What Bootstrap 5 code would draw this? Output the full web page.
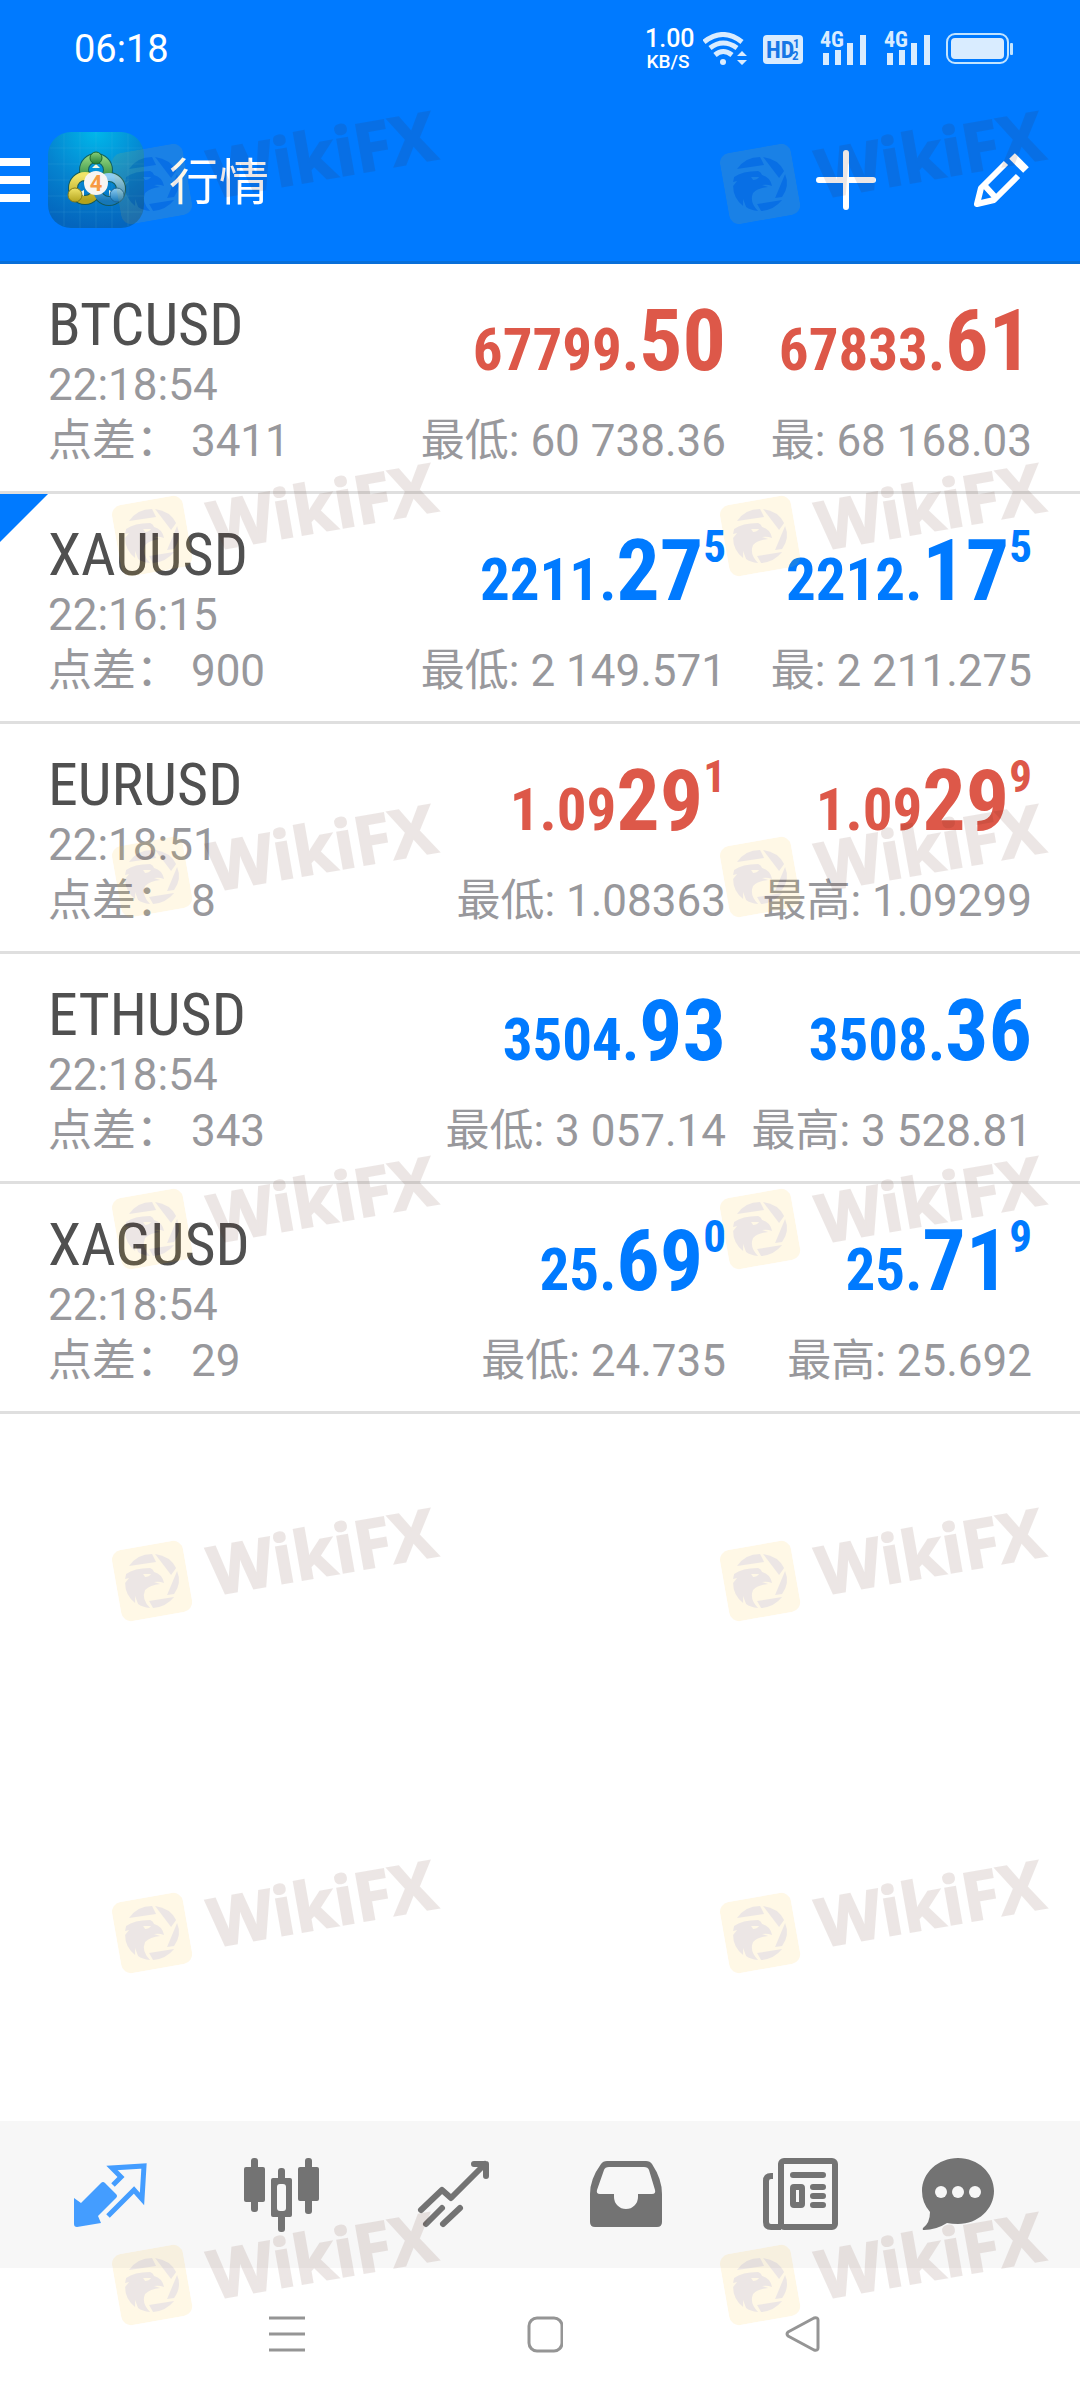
<!DOCTYPE html>
<html lang="zh-CN">
<head>
<meta charset="utf-8">
<meta name="viewport" content="width=device-width, initial-scale=1">
<title>行情</title>
<link href="https://cdn.jsdelivr.net/npm/bootstrap@5.3.0/dist/css/bootstrap.min.css" rel="stylesheet">
<style>
body{font-family:Roboto,"Noto Sans CJK SC",sans-serif;background:#fff;color:#505050}
button{background:none;border:0;padding:0}
svg{display:block;flex:none}
.top-area{background:#007aff;color:#fff;border-bottom:3px solid #086fd9}
.status-line{height:98px;padding:0 66px 0 74px;font-size:38px}
.net-speed{line-height:20px;font-size:19px;font-weight:500;margin-right:12px;width:46px}
.net-speed b{font-size:25px;line-height:26px;font-weight:500;display:block}
.signal-icon{margin-left:17px}
.battery-icon{margin-left:14px}
.title-line{height:163px;padding-right:50px}
.title-line h1{font-size:50px;line-height:60px;font-weight:400;padding-top:6px;margin-left:25px}
.app-logo{margin-left:18px}
.tools{gap:98px}
.quote{border-bottom:3px solid #dfdfdf;padding:29px 48px 22px}
.quote-high{width:306px}
.symbol-name{font:400 60px/64px "Roboto Condensed",Roboto,sans-serif}
.detail{font-size:44px;line-height:56px;color:#98989c;white-space:pre}
.price{height:120px;font:700 86px/95px "Roboto Condensed",Roboto,sans-serif;white-space:nowrap}
.price small{font-size:59px}
.price sup{font-size:45px;line-height:24px;vertical-align:38px;top:0}
.up{color:#007aff}
.down{color:#dd5849}
.corner{width:48px;height:48px;background:#007aff;clip-path:polygon(0 0,100% 0,0 100%)}
.tab-line{height:147px;background:#f7f7f7;padding:0 24px;color:#737373}
.tab-line .active{color:#449dff}
.tab-line a{color:inherit}
.key-line{height:132px;padding:0 148px 0 158px}
.watermarks{opacity:.1;color:#501909;pointer-events:none;padding:143px 0 0 116px}
.wm-line{height:352px}
.wm-short{height:341px}
.wm{width:608px;height:81px;flex:none;gap:22px;font:700 67px/81px "Open Sans",sans-serif;-webkit-text-stroke:2px #501909;stroke-linejoin:round;transform:rotate(-10deg);transform-origin:36px 50%}
</style>
<script src="https://cdn.jsdelivr.net/npm/bootstrap@5.3.0/dist/js/bootstrap.bundle.min.js"></script>
</head>
<body>
<svg width="0" height="0" class="position-absolute" aria-hidden="true">
  <symbol id="eagle" viewBox="0 0 72 72">
    <rect width="72" height="72" rx="10" fill="#ffbe18"/>
    <g transform="rotate(10 36 36)" fill="#501909">
      <path d="M13 21Q21 9 36 9L40 17Z"/>
      <path d="M39 9Q54 11 60 23L55 30Z"/>
      <path d="M61 26Q66 38 58 49L51 50Z"/>
      <path d="M33 56L58 52Q50 62 37 63Z"/>
      <path d="M10 29Q18 23 34 23Q37 24 38 27Q46 29 48 38Q43 36 38 37L44 39Q34 40 29 45Q25 54 34 63Q26 62 22 59L19 51V58Q9 50 9 38L13 33L9 34ZM27 29L29 32Q33 32 35 29Z" fill-rule="evenodd"/>
    </g>
  </symbol>
</svg>

<div class="position-relative min-vh-100 d-flex flex-column overflow-hidden">
  <header class="top-area">
    <div class="status-line d-flex align-items-center">
      <span class="me-auto">06:18</span>
      <div class="net-speed text-center"><b>1.00</b>KB/S</div>
      <svg width="44" height="34" viewBox="0 0 44 34" fill="none" stroke="#d9ecff" stroke-width="5">
        <path d="M1 10Q20-5 39 10M7 16Q20 6 34 16M12 23Q20 16 29 23"/>
        <g fill="#d9ecff" stroke="none"><circle cx="20" cy="30" r="3"/><path d="M34 24l5-5 5 5zM34 28h10l-5 5z"/></g>
      </svg>
      <svg class="ms-3" width="40" height="29" viewBox="0 0 40 29"><rect width="40" height="29" rx="4" fill="#d9ecff"/><g fill="#1677e6" font-family="Roboto Condensed" font-weight="700"><text x="3" y="23" font-size="24">HD</text><text x="30" y="13" font-size="13">1</text><text x="29" y="25" font-size="13">2</text></g></svg>
      <svg class="signal-icon" width="48" height="50" viewBox="0 -8 48 50" fill="#d9ecff"><path d="M3 21h6v12H3zM15 18h6v15h-6zM27 11h6v22h-6zM40 3h6v30h-6z"/><text x="0" y="15" font-family="Roboto Condensed" font-size="22" font-weight="700">4G</text></svg>
      <svg class="ms-3" width="48" height="50" viewBox="0 -8 48 50" fill="#d9ecff"><path d="M3 21h6v12H3zM15 18h6v15h-6zM27 11h6v22h-6zM40 3h6v30h-6z"/><text x="0" y="15" font-family="Roboto Condensed" font-size="22" font-weight="700">4G</text></svg>
      <svg class="battery-icon" width="68" height="32" viewBox="0 0 68 32"><rect x="1" y="1" width="61" height="29" rx="8" fill="none" stroke="#c2e4ff" stroke-width="2"/><rect x="5" y="5" width="53" height="21" rx="4" fill="#d9ecff"/><rect x="64" y="10" width="3" height="12" rx="1" fill="#c2e4ff"/></svg>
    </div>
    <div class="title-line d-flex align-items-center">
      <button type="button" aria-label="菜单"><svg width="30" height="44" fill="#fff"><path d="M0 0h30v8H0zM0 18h30v8H0zM0 36h30v8H0z"/></svg></button>
      <svg class="app-logo" width="96" height="96" viewBox="0 0 96 96">
        <defs>
          <radialGradient id="sky" cx=".5" cy="0" r="1"><stop offset="0" stop-color="#00b7ea"/><stop offset=".55" stop-color="#0583cf"/><stop offset="1" stop-color="#0465bd"/></radialGradient>
          <linearGradient id="gr" x2="0" y2="1"><stop stop-color="#8ad07a"/><stop offset="1" stop-color="#1f7d35"/></linearGradient>
          <linearGradient id="ye" x2="0" y2="1"><stop stop-color="#f0e468"/><stop offset="1" stop-color="#b3a31d"/></linearGradient>
          <linearGradient id="bl" x2="0" y2="1"><stop stop-color="#8ecdf2"/><stop offset="1" stop-color="#1677b8"/></linearGradient>
        </defs>
        <rect width="96" height="96" rx="23" fill="url(#sky)"/>
        <path d="M16 2v92M32 0v96M48 0v96M64 0v96M80 2v92M2 16h92M0 32h96M0 48h96M0 64h96M2 80h92" stroke="#5fc4ee" stroke-opacity=".15"/>
        <g fill="none" stroke-width="10" stroke="#174f3a" stroke-opacity=".75"><circle cx="48" cy="38" r="12"/><circle cx="37" cy="56" r="12"/><circle cx="61" cy="57" r="12"/></g>
        <g fill="none" stroke-width="8"><circle cx="48" cy="38" r="12" stroke="url(#gr)"/><circle cx="37" cy="56" r="12" stroke="url(#ye)"/><circle cx="61" cy="57" r="12" stroke="url(#bl)"/></g>
        <path d="M44 36l4-4 4 4zM30 61l6-3v6zM67 61l-6-3v6z" fill="#f4f7e0"/>
        <circle cx="48" cy="26" r="6" fill="url(#gr)" stroke="#1c6a30"/><circle cx="27" cy="63" r="7" fill="url(#ye)" stroke="#857a18"/><circle cx="69" cy="63" r="7" fill="url(#bl)" stroke="#1a659b"/>
        <circle cx="48" cy="51" r="12" fill="#f7f5f2"/>
        <text x="48" y="59" font-family="Roboto" font-size="22" font-weight="700" fill="#f79a42" text-anchor="middle">4</text>
      </svg>
      <h1 class="mb-0 me-auto">行情</h1>
      <div class="tools d-flex align-items-center">
        <button type="button" aria-label="添加"><svg width="60" height="60" stroke="#fff" stroke-width="6" stroke-linecap="round"><path d="M3 30h54M30 3v54"/></svg></button>
        <button type="button" aria-label="编辑"><svg width="56" height="56" fill="none" stroke="#fff" stroke-width="6"><path d="M32 11L7 36L3 52L20 48L44 24M11 34L22 46" stroke-linejoin="round"/><path d="M38 4L52 18" stroke-width="8"/></svg></button>
      </div>
    </div>
  </header>

  <main class="flex-grow-1">
    <ul class="list-unstyled mb-0">
      <li class="quote d-flex">
        <div class="flex-grow-1"><div class="symbol-name">BTCUSD</div><div class="detail">22:18:54</div><div class="detail">点差： 3411</div></div>
        <div class="text-end"><div class="price down"><small>67799.</small>50</div><div class="detail">最低: 60 738.36</div></div>
        <div class="quote-high text-end"><div class="price down"><small>67833.</small>61</div><div class="detail">最: 68 168.03</div></div>
      </li>
      <li class="quote d-flex position-relative">
        <span class="corner position-absolute top-0 start-0"></span>
        <div class="flex-grow-1"><div class="symbol-name">XAUUSD</div><div class="detail">22:16:15</div><div class="detail">点差： 900</div></div>
        <div class="text-end"><div class="price up"><small>2211.</small>27<sup>5</sup></div><div class="detail">最低: 2 149.571</div></div>
        <div class="quote-high text-end"><div class="price up"><small>2212.</small>17<sup>5</sup></div><div class="detail">最: 2 211.275</div></div>
      </li>
      <li class="quote d-flex">
        <div class="flex-grow-1"><div class="symbol-name">EURUSD</div><div class="detail">22:18:51</div><div class="detail">点差： 8</div></div>
        <div class="text-end"><div class="price down"><small>1.09</small>29<sup>1</sup></div><div class="detail">最低: 1.08363</div></div>
        <div class="quote-high text-end"><div class="price down"><small>1.09</small>29<sup>9</sup></div><div class="detail">最高: 1.09299</div></div>
      </li>
      <li class="quote d-flex">
        <div class="flex-grow-1"><div class="symbol-name">ETHUSD</div><div class="detail">22:18:54</div><div class="detail">点差： 343</div></div>
        <div class="text-end"><div class="price up"><small>3504.</small>93</div><div class="detail">最低: 3 057.14</div></div>
        <div class="quote-high text-end"><div class="price up"><small>3508.</small>36</div><div class="detail">最高: 3 528.81</div></div>
      </li>
      <li class="quote d-flex">
        <div class="flex-grow-1"><div class="symbol-name">XAGUSD</div><div class="detail">22:18:54</div><div class="detail">点差： 29</div></div>
        <div class="text-end"><div class="price up"><small>25.</small>69<sup>0</sup></div><div class="detail">最低: 24.735</div></div>
        <div class="quote-high text-end"><div class="price up"><small>25.</small>71<sup>9</sup></div><div class="detail">最高: 25.692</div></div>
      </li>
    </ul>
  </main>

  <nav class="tab-line nav nav-fill flex-nowrap align-items-center">
    <a class="nav-item d-flex justify-content-center active" href="#" aria-label="行情"><svg width="96" height="96"><path d="M51 38L59 30L50 21L82 19L80 52L72 43L46 69" fill="none" stroke="currentColor" stroke-width="5" stroke-linejoin="miter"/><path d="M12 51L19 56L39 36Q41 34 43 36L54 47Q56 49 54 51L36 69L39 76L15 80Q12 80 12 77Z" fill="currentColor"/></svg></a>
    <a class="nav-item d-flex justify-content-center" href="#" aria-label="图表"><svg width="96" height="96" fill="currentColor"><rect x="10" y="20" width="21" height="35" rx="2"/><rect x="17" y="11" width="7" height="54" rx="3"/><rect x="64" y="20" width="21" height="34" rx="2"/><rect x="71" y="11" width="7" height="56" rx="3"/><rect x="37" y="31" width="21" height="39" rx="2"/><rect x="44" y="21" width="7" height="64" rx="3"/><rect x="43" y="37" width="9" height="27" rx="3" fill="#f7f7f7"/></svg></a>
    <a class="nav-item d-flex justify-content-center" href="#" aria-label="交易"><svg width="96" height="96" fill="none" stroke="currentColor" stroke-width="6" stroke-linecap="round" stroke-linejoin="round"><path d="M15 63L36 43L45 51L79 17M68 17H80V29M20 77L36 61M37 77L54 61"/></svg></a>
    <a class="nav-item d-flex justify-content-center" href="#" aria-label="历史"><svg width="96" height="96" fill="currentColor"><path fill-rule="evenodd" d="M29 14H68Q72 14 74 17Q84 32 84 47V75Q84 80 79 80H17Q12 80 12 75V47Q12 32 23 17Q25 14 29 14ZM31 20Q27 20 26 23L19 43Q18 47 22 47H36V50A12 12 0 0 0 60 50V47H74Q78 47 77 43L71 23Q70 20 66 20Z"/></svg></a>
    <a class="nav-item d-flex justify-content-center" href="#" aria-label="新闻"><svg width="96" height="96" fill="none" stroke="currentColor" stroke-width="6"><rect x="31" y="14" width="54" height="66" rx="3"/><path d="M23 29H21Q16 29 16 34V75Q16 80 21 80H31"/><path d="M43 28H73M63 40H73M63 49H73M63 58H73" stroke-linecap="round"/><rect x="43" y="40" width="9" height="18" rx="1"/></svg></a>
    <a class="nav-item d-flex justify-content-center" href="#" aria-label="消息"><svg width="96" height="96" fill="currentColor"><path d="M36 11C56 11 72 26 72 44S56 77 36 77Q30 77 25 76Q14 83 2 83Q0 83 1 81Q8 76 8 65Q0 56 0 44C0 26 16 11 36 11Z"/><g fill="#f7f7f7"><circle cx="19" cy="45" r="6"/><circle cx="36" cy="45" r="6"/><circle cx="53" cy="45" r="6"/></g></svg></a>
  </nav>

  <div class="key-line d-flex align-items-center">
    <button type="button" class="col d-flex justify-content-center" aria-label="最近任务"><svg width="36" height="38" stroke="#959595" stroke-width="3"><path d="M0 3h36M0 19h36M0 35h36"/></svg></button>
    <button type="button" class="col d-flex justify-content-center" aria-label="主屏幕"><svg width="36" height="38" fill="none" stroke="#959595" stroke-width="3"><rect x="2" y="3" width="33" height="33" rx="8"/></svg></button>
    <button type="button" class="col d-flex justify-content-center" aria-label="返回"><svg width="36" height="38" fill="none" stroke="#959595" stroke-width="3" stroke-linejoin="round"><path d="M3 17Q1 19 3 21L29 35Q33 36 33 33V5Q33 2 29 3Z"/></svg></button>
  </div>

  <div class="watermarks position-absolute top-0 start-0 w-100 h-100 overflow-hidden" aria-hidden="true">
    <div class="wm-line d-flex"><div class="wm d-flex align-items-center"><svg width="72" height="72"><use href="#eagle"/></svg><span>WikiFX</span></div><div class="wm d-flex align-items-center"><svg width="72" height="72"><use href="#eagle"/></svg><span>WikiFX</span></div></div>
    <div class="wm-line wm-short d-flex"><div class="wm d-flex align-items-center"><svg width="72" height="72"><use href="#eagle"/></svg><span>WikiFX</span></div><div class="wm d-flex align-items-center"><svg width="72" height="72"><use href="#eagle"/></svg><span>WikiFX</span></div></div>
    <div class="wm-line d-flex"><div class="wm d-flex align-items-center"><svg width="72" height="72"><use href="#eagle"/></svg><span>WikiFX</span></div><div class="wm d-flex align-items-center"><svg width="72" height="72"><use href="#eagle"/></svg><span>WikiFX</span></div></div>
    <div class="wm-line d-flex"><div class="wm d-flex align-items-center"><svg width="72" height="72"><use href="#eagle"/></svg><span>WikiFX</span></div><div class="wm d-flex align-items-center"><svg width="72" height="72"><use href="#eagle"/></svg><span>WikiFX</span></div></div>
    <div class="wm-line d-flex"><div class="wm d-flex align-items-center"><svg width="72" height="72"><use href="#eagle"/></svg><span>WikiFX</span></div><div class="wm d-flex align-items-center"><svg width="72" height="72"><use href="#eagle"/></svg><span>WikiFX</span></div></div>
    <div class="wm-line d-flex"><div class="wm d-flex align-items-center"><svg width="72" height="72"><use href="#eagle"/></svg><span>WikiFX</span></div><div class="wm d-flex align-items-center"><svg width="72" height="72"><use href="#eagle"/></svg><span>WikiFX</span></div></div>
    <div class="wm-line d-flex"><div class="wm d-flex align-items-center"><svg width="72" height="72"><use href="#eagle"/></svg><span>WikiFX</span></div><div class="wm d-flex align-items-center"><svg width="72" height="72"><use href="#eagle"/></svg><span>WikiFX</span></div></div>
  </div>
</div>
</body>
</html>
